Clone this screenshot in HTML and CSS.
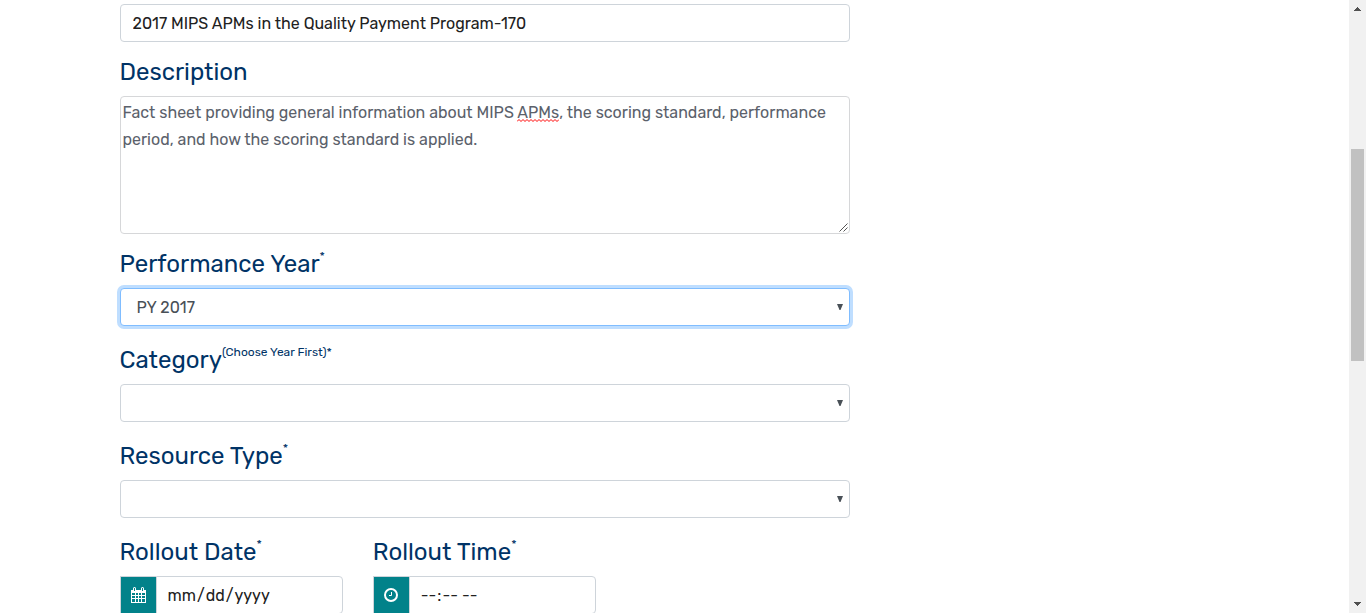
FILE: index.html
```html
<!DOCTYPE html>
<html lang="en-US">
<head>
<meta charset="utf-8">
<title>Edit Resource</title>
<link rel="stylesheet" href="styles.css">
</head>
<body>
<div class="page">
  <main class="content">
    <div class="container">
      <form class="form">
        <div class="field">
          <input class="control" type="text" aria-label="Title" value="2017 MIPS APMs in the Quality Payment Program-170">
        </div>
        <div class="field">
          <label class="label" for="description">Description</label>
          <div class="textarea-wrap">
            <textarea class="textarea" id="description" spellcheck="false">Fact sheet providing general information about MIPS APMs, the scoring standard, performance period, and how the scoring standard is applied.</textarea>
            <svg class="squiggle" viewBox="0 0 42 3" aria-hidden="true"><path d="M0 2.5L2 .5L4 2.5L6 .5L8 2.5L10 .5L12 2.5L14 .5L16 2.5L18 .5L20 2.5L22 .5L24 2.5L26 .5L28 2.5L30 .5L32 2.5L34 .5L36 2.5L38 .5L40 2.5L42 .5"/></svg>
            <svg class="grip" viewBox="0 0 9 9" aria-hidden="true"><path d="M.5 8.5l8-8M4.500 8.500l4-4"/></svg>
          </div>
        </div>
        <div class="field field-select">
          <label class="label" for="year">Performance Year<sup>*</sup></label>
          <div class="select-wrap">
            <select class="control select focused" id="year"><option>PY 2017</option></select>
            <svg class="arrow" viewBox="0 0 6 6" aria-hidden="true"><path d="M0 0h6L3.500 6h-1z"/></svg>
          </div>
        </div>
        <div class="field field-select">
          <label class="label" for="category">Category<sup>(Choose Year First)*</sup></label>
          <div class="select-wrap">
            <select class="control select" id="category"><option></option></select>
            <svg class="arrow" viewBox="0 0 6 6" aria-hidden="true"><path d="M0 0h6L3.500 6h-1z"/></svg>
          </div>
        </div>
        <div class="field field-select">
          <label class="label" for="type">Resource Type<sup>*</sup></label>
          <div class="select-wrap">
            <select class="control select" id="type"><option></option></select>
            <svg class="arrow" viewBox="0 0 6 6" aria-hidden="true"><path d="M0 0h6L3.500 6h-1z"/></svg>
          </div>
        </div>
        <div class="rollout">
          <div class="field">
            <label class="label" for="date">Rollout Date<sup>*</sup></label>
            <div class="group">
              <span class="addon">
                <svg class="icon" viewBox="0 0 15 16" aria-hidden="true"><path fill="#fff" d="M0 3h2V1.500Q2 0 3.500 0T5 1.500V3h5V1.500Q10 0 11.500 0T13 1.500V3h2v13H0z"/><path fill="#02828a" d="M3 1h1v3H3zM11 1h1v3h-1zM1 6h3v2H1zM5 6h2v2H5zM8 6h2v2H8zM11 6h3v2h-3zM1 9h3v2H1zM5 9h2v2H5zM8 9h2v2H8zM11 9h3v2h-3zM1 12h3v3H1zM5 12h2v3H5zM8 12h2v3H8zM11 12h3v3h-3z"/></svg>
              </span>
              <input class="control picker" id="date" type="date">
            </div>
          </div>
          <div class="field">
            <label class="label" for="time">Rollout Time<sup>*</sup></label>
            <div class="group">
              <span class="addon">
                <svg class="icon" viewBox="0 0 15 16" aria-hidden="true"><g fill="none" stroke="#fff"><circle cx="7" cy="8" r="6" stroke-width="2"/><path d="M7.500 5v3.500H5"/></g></svg>
              </span>
              <input class="control picker" id="time" type="time">
            </div>
          </div>
        </div>
      </form>
    </div>
  </main>
  <div class="scrollbar" aria-hidden="true">
    <svg class="scroll-arrow" viewBox="0 0 7 4"><path d="M3 0h1v1h1v1h1v1h1v1H0V3h1V2h1V1h1z"/></svg>
    <div class="track"><div class="thumb"></div></div>
    <svg class="scroll-arrow" viewBox="0 0 7 4"><path d="M0 0h7v1H6v1H5v1H4v1H3V3H2V2H1V1H0z"/></svg>
  </div>
</div>
</body>
</html>
```
FILE: styles.css
```css
* {
  box-sizing: border-box;
}

body {
  margin: 0;
  background: #fff;
  color: #212121;
  font-family: Rubik, Roboto, "Liberation Sans", sans-serif;
  font-size: 16px;
}

.page {
  display: flex;
  height: 100vh;
  overflow: hidden;
}

.content {
  flex: 1;
  min-width: 0;
  overflow: hidden;
}

.container {
  max-width: 1140px;
  margin: 0 auto;
  padding: 4px 15px 0;
}

.form {
  width: calc(66.667% - 10px);
}

.field {
  margin-bottom: 12px;
}

.field-select {
  margin-bottom: 16px;
}

.label {
  display: block;
  margin-bottom: 6px;
  color: #003366;
  font-size: 24px;
  line-height: 36px;
}

.label sup {
  font-size: 12px;
  line-height: 0;
  vertical-align: 12px;
}

.control {
  display: block;
  width: 100%;
  height: 38px;
  margin: 0;
  padding: 0 12px;
  border: 1px solid #ced4da;
  border-radius: 4px;
  outline: 0;
  background: #fff;
  color: #212121;
  font: inherit;
}

.textarea-wrap,
.select-wrap {
  position: relative;
}

.textarea {
  display: block;
  width: 100%;
  height: 138px;
  margin: 0;
  padding: 2px;
  border: 1px solid #d6d7d9;
  border-radius: 4px;
  outline: 0;
  resize: none;
  color: #5b616b;
  font: inherit;
  line-height: 27px;
}

.squiggle {
  position: absolute;
  top: 23px;
  left: 397px;
  width: 42px;
  height: 3px;
  fill: none;
  stroke: #f00;
}

.grip {
  position: absolute;
  right: 2px;
  bottom: 2px;
  width: 9px;
  height: 9px;
  stroke: #555;
}

.select {
  appearance: none;
  padding: 0 16px;
  color: #495057;
}

.focused {
  border-color: #80bdff;
  box-shadow: 0 0 0 3px #bfdeff;
}

.arrow {
  position: absolute;
  top: 16px;
  right: 7px;
  width: 6px;
  height: 6px;
  fill: #495057;
}

.rollout {
  display: grid;
  grid-template-columns: repeat(3, 1fr);
  gap: 30px;
}

.group {
  display: flex;
}

.addon {
  display: flex;
  flex: none;
  align-items: center;
  justify-content: center;
  width: 36px;
  border: 1px solid #ced4da;
  border-right: 0;
  background: #02828a;
}

.icon {
  width: 15px;
  height: 16px;
}

.picker {
  flex: 1;
  min-width: 0;
  padding: 0 10px;
  border-radius: 0 4px 4px 0;
}

.picker::-webkit-calendar-picker-indicator {
  display: none;
}

.scrollbar {
  display: flex;
  flex: none;
  flex-direction: column;
  align-items: center;
  width: 17px;
  padding: 7px 2px;
  background: #f1f1f1;
}

.scroll-arrow {
  flex: none;
  width: 7px;
  height: 4px;
  fill: #505050;
}

.track {
  flex: 1;
  width: 100%;
  padding-top: 138px;
}

.thumb {
  height: 212px;
  background: #c1c1c1;
}
```
